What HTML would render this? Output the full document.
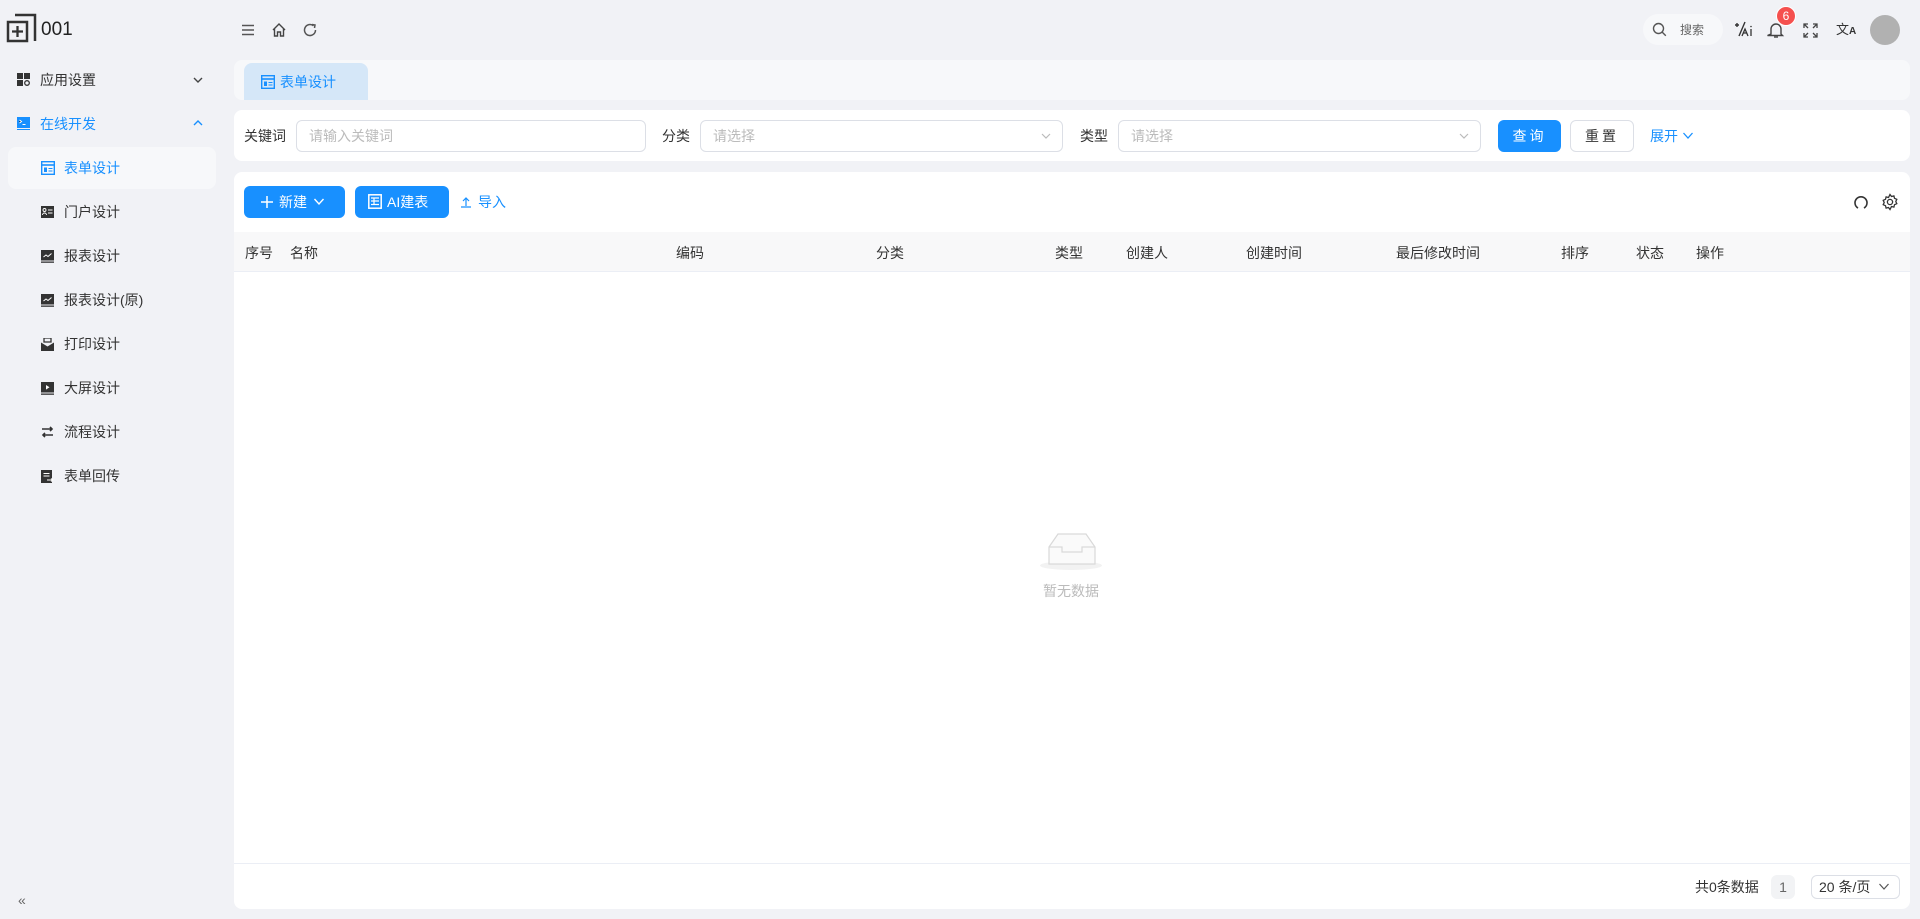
<!DOCTYPE html>
<html><head><meta charset="utf-8"><style>
*{margin:0;padding:0;box-sizing:border-box}
body{width:1920px;height:919px;background:#f1f2f6;font-family:"Liberation Sans","Noto Sans CJK SC",sans-serif;font-size:14px;color:#333;position:relative;overflow:hidden}
.a{position:absolute}
.t{position:absolute;white-space:nowrap;line-height:20px}
.mi{color:#333}
svg{display:block}
.panel{position:absolute;background:#fff;border-radius:8px}
.inp{position:absolute;height:32px;border:1px solid #dcdfe6;border-radius:6px;background:#fff;color:#bbb;font-size:14px;line-height:30px;padding-left:12px}
.th{position:absolute;top:243px;font-size:14px;color:#333;line-height:20px}
</style></head><body>
<!-- logo -->
<svg class="a" style="left:5px;top:13px" width="32" height="32" viewBox="0 0 32 32"><path d="M10 2h20v26" fill="none" stroke="#333" stroke-width="2.5"/><rect x="3" y="9" width="19" height="19" fill="none" stroke="#333" stroke-width="2.5"/><path d="M12.5 13v11M7 18.5h11" stroke="#333" stroke-width="2.3"/></svg>
<div class="t" style="left:41px;top:19px;font-size:19px;line-height:22px;color:#222">001</div>
<!-- top icons -->
<svg class="a" style="left:241px;top:23px" width="14" height="14" viewBox="0 0 14 14"><path d="M1 2.5h12M1 7h12M1 11.5h12" stroke="#555" stroke-width="1.4"/></svg>
<svg class="a" style="left:271px;top:22px" width="16" height="16" viewBox="0 0 16 16"><path d="M2 8L8 2l6 6M3.5 6.5V14h3v-4h3v4h3V6.5" fill="none" stroke="#444" stroke-width="1.4"/></svg>
<svg class="a" style="left:302px;top:22px" width="16" height="16" viewBox="0 0 16 16"><path d="M13.5 8A5.5 5.5 0 1 1 11.5 3.8" fill="none" stroke="#555" stroke-width="1.5"/><path d="M10 2.5l3 .5-.5 3" fill="none" stroke="#555" stroke-width="1.5"/></svg>
<!-- header right -->
<div class="a" style="left:1643px;top:14px;width:80px;height:31px;border-radius:16px;background:#f7f8fa"></div>
<svg class="a" style="left:1652px;top:22px" width="15" height="15" viewBox="0 0 15 15"><circle cx="6.5" cy="6.5" r="5" fill="none" stroke="#555" stroke-width="1.4"/><path d="M10.3 10.3l3.5 3.5" stroke="#555" stroke-width="1.4"/></svg>
<div class="t" style="left:1680px;top:20px;font-size:12px;color:#666">搜索</div>
<svg class="a" style="left:1734px;top:20px" width="20" height="18" viewBox="0 0 20 18"><path d="M1 5h4M3 3v4M11 2L5 16" stroke="#333" stroke-width="1.4"/><path d="M8 16l3-7 3 7M9.5 13h3M17 9v7" stroke="#333" stroke-width="1.3" fill="none"/><circle cx="17" cy="6.5" r=".8" fill="#333"/></svg>
<svg class="a" style="left:1767px;top:21px" width="18" height="18" viewBox="0 0 18 18"><path d="M4 13V8a5 5 0 0 1 10 0v5l1.5 1.5h-15z" fill="none" stroke="#444" stroke-width="1.4"/><path d="M7 16h4" stroke="#444" stroke-width="1.4"/></svg>
<div class="a" style="left:1776px;top:6px;width:20px;height:20px;border-radius:10px;background:#f5504e;color:#fff;font-size:12px;line-height:18px;text-align:center;border:1px solid #fff">6</div>
<svg class="a" style="left:1803px;top:23px" width="15" height="15" viewBox="0 0 15 15"><path d="M1 5V1h4M10 1h4v4M14 10v4h-4M5 14H1v-4M1 1l4 4M14 1l-4 4M14 14l-4-4M1 14l4-4" fill="none" stroke="#444" stroke-width="1.3"/></svg>
<div class="t" style="left:1836px;top:20px;font-size:13px;color:#333">文<span style="font-size:10px;font-weight:bold">A</span></div>
<div class="a" style="left:1870px;top:15px;width:30px;height:30px;border-radius:15px;background:#b1b1b1"></div>
<!-- sidebar -->
<svg class="a" style="left:17px;top:73px" width="13" height="13" viewBox="0 0 13 13"><rect x="0" y="0" width="6" height="6" fill="#333"/><rect x="7" y="0" width="6" height="6" fill="#333"/><rect x="0" y="7" width="6" height="6" fill="#333"/><circle cx="10" cy="10" r="2.3" fill="none" stroke="#333" stroke-width="1.3"/></svg>
<div class="t mi" style="left:40px;top:70px">应用设置</div>
<svg class="a" style="left:192px;top:75px" width="12" height="10" viewBox="0 0 12 10"><path d="M2 3l4 4 4-4" fill="none" stroke="#444" stroke-width="1.4"/></svg>
<svg class="a" style="left:17px;top:117px" width="13" height="13" viewBox="0 0 13 13"><rect x="0" y="0" width="13" height="11" fill="#1890ff"/><path d="M2.5 3l2 1.5-2 1.5M5.5 7.5h3" stroke="#fff" stroke-width="1"/><rect x="0" y="12" width="13" height="1" fill="#1890ff"/></svg>
<div class="t" style="left:40px;top:114px;color:#1890ff">在线开发</div>
<svg class="a" style="left:192px;top:118px" width="12" height="10" viewBox="0 0 12 10"><path d="M2 7l4-4 4 4" fill="none" stroke="#1890ff" stroke-width="1.4"/></svg>
<div class="a" style="left:8px;top:147px;width:208px;height:42px;border-radius:8px;background:#f7f8fa"></div>
<svg class="a" style="left:41px;top:161px" width="14" height="14" viewBox="0 0 14 14"><rect x="0.7" y="0.7" width="12.6" height="12.6" fill="none" stroke="#1890ff" stroke-width="1.4"/><path d="M0.7 4h12.6" stroke="#1890ff" stroke-width="1.6"/><rect x="3" y="6.5" width="3" height="4.5" fill="#1890ff"/><path d="M7.5 7.5h4M7.5 10h4" stroke="#1890ff" stroke-width="1"/></svg>
<div class="t" style="left:64px;top:158px;color:#1890ff">表单设计</div>
<div class="t mi" style="left:64px;top:202px">门户设计</div>
<div class="t mi" style="left:64px;top:246px">报表设计</div>
<div class="t mi" style="left:64px;top:290px">报表设计(原)</div>
<div class="t mi" style="left:64px;top:334px">打印设计</div>
<div class="t mi" style="left:64px;top:378px">大屏设计</div>
<div class="t mi" style="left:64px;top:422px">流程设计</div>
<div class="t mi" style="left:64px;top:466px">表单回传</div>
<svg class="a" style="left:41px;top:206px" width="13" height="12" viewBox="0 0 13 12"><rect width="13" height="12" fill="#333"/><circle cx="3.5" cy="4" r="1.5" fill="none" stroke="#fff" stroke-width=".9"/><path d="M1.5 9a2 2 0 0 1 4 0M7 4h4.5M7 7h4.5" stroke="#fff" stroke-width=".9" fill="none"/></svg>
<svg class="a" style="left:41px;top:250px" width="13" height="13" viewBox="0 0 13 13"><rect width="13" height="10.5" fill="#333"/><rect y="11.5" width="13" height="1.3" fill="#333"/><path d="M2.5 7l2.5-2 2 1.5 3.5-3" stroke="#fff" stroke-width="1" fill="none"/></svg>
<svg class="a" style="left:41px;top:294px" width="13" height="13" viewBox="0 0 13 13"><rect width="13" height="10.5" fill="#333"/><rect y="11.5" width="13" height="1.3" fill="#333"/><path d="M2.5 7l2.5-2 2 1.5 3.5-3" stroke="#fff" stroke-width="1" fill="none"/></svg>
<svg class="a" style="left:41px;top:338px" width="13" height="13" viewBox="0 0 13 13"><path d="M3 0h7v4H3z" fill="none" stroke="#333" stroke-width="1.3"/><path d="M0 4.5l6.5 4 6.5-4V13H0z" fill="#333"/></svg>
<svg class="a" style="left:41px;top:382px" width="13" height="13" viewBox="0 0 13 13"><rect width="13" height="10.5" fill="#333"/><rect y="11.5" width="13" height="1.3" fill="#333"/><path d="M5 3l3.5 2.3L5 7.6z" fill="#fff"/></svg>
<svg class="a" style="left:41px;top:426px" width="13" height="12" viewBox="0 0 13 12"><path d="M1 3h10M9 1l2 2-2 2M12 9H2M4 7L2 9l2 2" fill="none" stroke="#333" stroke-width="1.6"/></svg>
<svg class="a" style="left:41px;top:470px" width="13" height="13" viewBox="0 0 13 13"><rect width="11" height="13" fill="#333"/><path d="M2.5 3.5h6M2.5 6h6" stroke="#fff" stroke-width="1"/><path d="M6 10h6M10 8.5l2 1.5-2 1.5" stroke="#fff" stroke-width="1" fill="none"/></svg>
<div class="t" style="left:18px;top:890px;color:#666;font-size:14px">«</div>
<!-- tab bar -->
<div class="a" style="left:234px;top:60px;width:1676px;height:40px;background:#f7f8fa;border-radius:8px"></div>
<div class="a" style="left:244px;top:63px;width:124px;height:37px;background:#d5e7f8;border-radius:8px 8px 0 0"></div>
<svg class="a" style="left:261px;top:75px" width="14" height="14" viewBox="0 0 14 14"><rect x="0.7" y="0.7" width="12.6" height="12.6" fill="none" stroke="#1890ff" stroke-width="1.4"/><path d="M0.7 4h12.6" stroke="#1890ff" stroke-width="1.6"/><rect x="3" y="6.5" width="3" height="4.5" fill="#1890ff"/><path d="M7.5 7.5h4M7.5 10h4" stroke="#1890ff" stroke-width="1"/></svg>
<div class="t" style="left:280px;top:72px;color:#1890ff">表单设计</div>
<!-- search panel -->
<div class="panel" style="left:234px;top:110px;width:1676px;height:51px"></div>
<div class="t" style="left:244px;top:126px">关键词</div>
<div class="inp" style="left:296px;top:120px;width:350px">请输入关键词</div>
<div class="t" style="left:662px;top:126px">分类</div>
<div class="inp" style="left:700px;top:120px;width:363px">请选择</div>
<svg class="a" style="left:1040px;top:131px" width="12" height="10" viewBox="0 0 12 10"><path d="M2 3l4 4 4-4" fill="none" stroke="#bbb" stroke-width="1.2"/></svg>
<div class="t" style="left:1080px;top:126px">类型</div>
<div class="inp" style="left:1118px;top:120px;width:363px">请选择</div>
<svg class="a" style="left:1458px;top:131px" width="12" height="10" viewBox="0 0 12 10"><path d="M2 3l4 4 4-4" fill="none" stroke="#bbb" stroke-width="1.2"/></svg>
<div class="a" style="left:1498px;top:120px;width:63px;height:32px;border-radius:6px;background:#1890ff;color:#fff;text-align:center;line-height:32px;letter-spacing:3px">查询</div>
<div class="a" style="left:1570px;top:120px;width:64px;height:32px;border-radius:6px;border:1px solid #dcdfe6;color:#333;text-align:center;line-height:30px;letter-spacing:3px">重置</div>
<div class="t" style="left:1650px;top:126px;color:#1890ff">展开</div>
<svg class="a" style="left:1682px;top:131px" width="12" height="10" viewBox="0 0 12 10"><path d="M1.5 2l4.5 5 4.5-5" fill="none" stroke="#1890ff" stroke-width="1.3"/></svg>
<!-- table panel -->
<div class="panel" style="left:234px;top:172px;width:1676px;height:737px"></div>
<div class="a" style="left:244px;top:186px;width:101px;height:32px;border-radius:6px;background:#1890ff"></div>
<svg class="a" style="left:260px;top:195px" width="14" height="14" viewBox="0 0 14 14"><path d="M7 1v12M1 7h12" stroke="#fff" stroke-width="1.5"/></svg>
<div class="t" style="left:279px;top:192px;color:#fff">新建</div>
<svg class="a" style="left:313px;top:197px" width="12" height="10" viewBox="0 0 12 10"><path d="M1.5 2l4.5 5 4.5-5" fill="none" stroke="#fff" stroke-width="1.4"/></svg>
<div class="a" style="left:355px;top:186px;width:94px;height:32px;border-radius:6px;background:#1890ff"></div>
<svg class="a" style="left:368px;top:194px" width="14" height="15" viewBox="0 0 14 15"><rect x="0.8" y="0.8" width="12.4" height="13.4" fill="none" stroke="#fff" stroke-width="1.5"/><path d="M3 4h8M3 7h8M6 4v6M3 10.5h8" stroke="#fff" stroke-width="1.2"/></svg>
<div class="t" style="left:387px;top:192px;color:#fff">AI建表</div>
<svg class="a" style="left:460px;top:196px" width="12" height="12" viewBox="0 0 12 12"><path d="M6 10V2M3 5l3-3 3 3M1 11h10" fill="none" stroke="#1890ff" stroke-width="1.2"/></svg>
<div class="t" style="left:478px;top:192px;color:#1890ff">导入</div>
<svg class="a" style="left:1853px;top:194px" width="16" height="16" viewBox="0 0 16 16"><path d="M5 14A6 6 0 1 1 11 14" fill="none" stroke="#333" stroke-width="1.6"/></svg>
<svg class="a" style="left:1881px;top:193px" width="18" height="18" viewBox="0 0 18 18"><path d="M9 1.5l1.5 2 2.4-.6.6 2.4 2.3 1-1 2.2 1 2.2-2.3 1-.6 2.4-2.4-.6L9 16.5l-1.5-2-2.4.6-.6-2.4-2.3-1 1-2.2-1-2.2 2.3-1 .6-2.4 2.4.6z" fill="none" stroke="#333" stroke-width="1.3"/><circle cx="9" cy="9" r="2.6" fill="none" stroke="#333" stroke-width="1.3"/></svg>
<div class="a" style="left:234px;top:232px;width:1676px;height:40px;background:#f8f8f9;border-bottom:1px solid #ebeef5"></div>
<div class="th" style="left:245px">序号</div>
<div class="th" style="left:290px">名称</div>
<div class="th" style="left:676px">编码</div>
<div class="th" style="left:876px">分类</div>
<div class="th" style="left:1055px">类型</div>
<div class="th" style="left:1126px">创建人</div>
<div class="th" style="left:1246px">创建时间</div>
<div class="th" style="left:1396px">最后修改时间</div>
<div class="th" style="left:1561px">排序</div>
<div class="th" style="left:1636px">状态</div>
<div class="th" style="left:1696px">操作</div>
<!-- empty -->
<div class="a" style="left:1040px;top:561px;width:62px;height:9px;border-radius:50%;background:#f2f2f2"></div>
<svg class="a" style="left:1048px;top:533px" width="48" height="33" viewBox="0 0 48 33"><path d="M1 14L10 1h28l9 13v17H1z" fill="#fafafa" stroke="#d9d9d9" stroke-width="1.2"/><path d="M1 14h13v5h20v-5h13" fill="none" stroke="#d9d9d9" stroke-width="1.2"/></svg>
<div class="t" style="left:1043px;top:581px;color:#bbb;font-size:14px">暂无数据</div>
<!-- footer -->
<div class="a" style="left:234px;top:863px;width:1676px;height:1px;background:#ebeef5"></div>
<div class="t" style="left:1695px;top:877px">共0条数据</div>
<div class="a" style="left:1771px;top:875px;width:24px;height:24px;border-radius:6px;background:#f2f3f5;color:#666;text-align:center;line-height:24px">1</div>
<div class="a" style="left:1811px;top:875px;width:89px;height:24px;border-radius:6px;border:1px solid #dcdfe6;line-height:22px;padding-left:7px;color:#333">20 条/页</div>
<svg class="a" style="left:1878px;top:882px" width="12" height="10" viewBox="0 0 12 10"><path d="M1.5 2l4.5 5 4.5-5" fill="none" stroke="#555" stroke-width="1.2"/></svg>
</body></html>
